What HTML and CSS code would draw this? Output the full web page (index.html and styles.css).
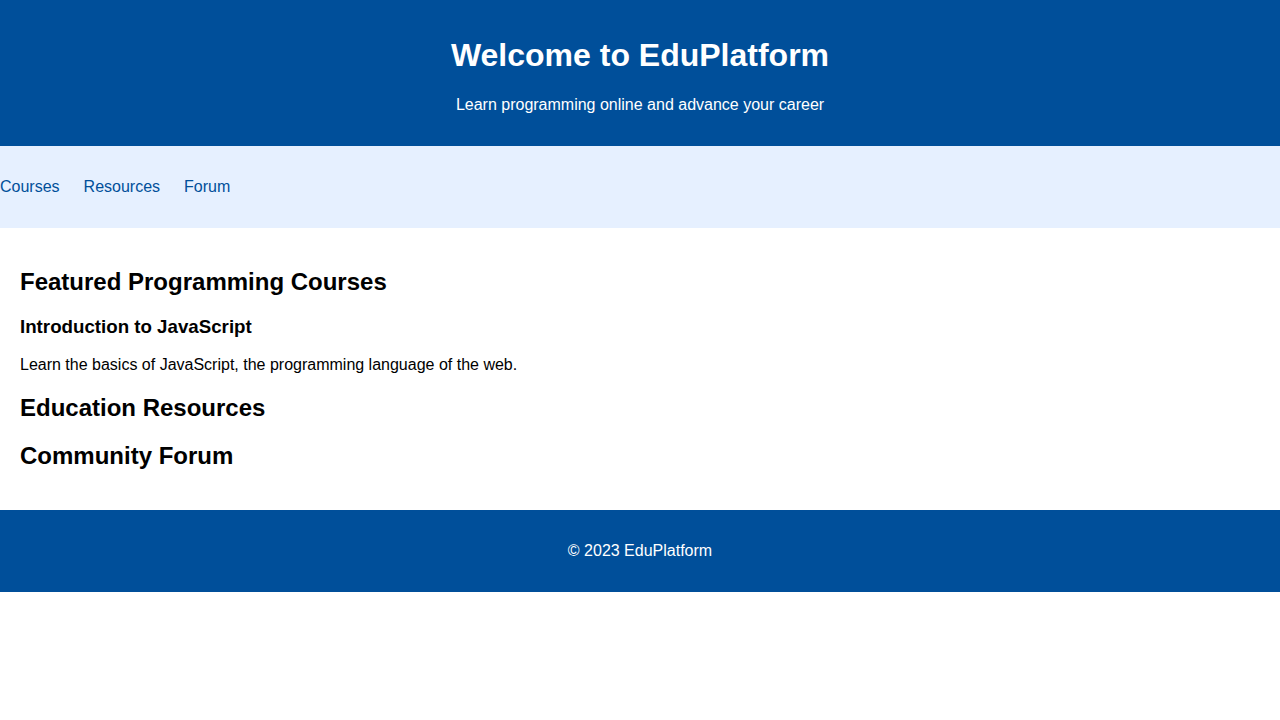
FILE: index.html
```html
<!DOCTYPE html>
<html lang="en">
<head>
<meta charset="utf-8">
<title>EduPlatform</title>
<link rel="stylesheet" href="styles.css">
</head>
<body>
<header class="site-header">
  <h1>Welcome to EduPlatform</h1>
  <p>Learn programming online and advance your career</p>
</header>
<nav class="site-nav">
  <ul class="nav-list">
    <li><a href="#courses">Courses</a></li>
    <li><a href="#resources">Resources</a></li>
    <li><a href="#forum">Forum</a></li>
  </ul>
</nav>
<main class="content">
  <section id="courses">
    <h2>Featured Programming Courses</h2>
    <article>
      <h3>Introduction to JavaScript</h3>
      <p>Learn the basics of JavaScript, the programming language of the web.</p>
    </article>
  </section>
  <section id="resources">
    <h2>Education Resources</h2>
  </section>
  <section id="forum">
    <h2>Community Forum</h2>
  </section>
</main>
<footer class="site-footer">
  <p>&copy; 2023 EduPlatform</p>
</footer>
</body>
</html>
```
FILE: styles.css
```css
body {
  margin: 0;
  font-family: "Liberation Sans", Arial, sans-serif;
  color: #000;
  background: #fff;
}
.site-header {
  background: #004f9a;
  color: #fff;
  text-align: center;
  padding: 16px;
}
.site-nav {
  background: #e6f0ff;
  padding: 16px 0;
}
.nav-list {
  list-style: none;
  margin: 16px 0;
  padding: 0;
  display: flex;
  gap: 24px;
}
.nav-list a {
  color: #004f9a;
  text-decoration: none;
}
.content {
  padding: 20px;
}
.site-footer {
  background: #004f9a;
  color: #fff;
  text-align: center;
  padding: 16px;
}
```
